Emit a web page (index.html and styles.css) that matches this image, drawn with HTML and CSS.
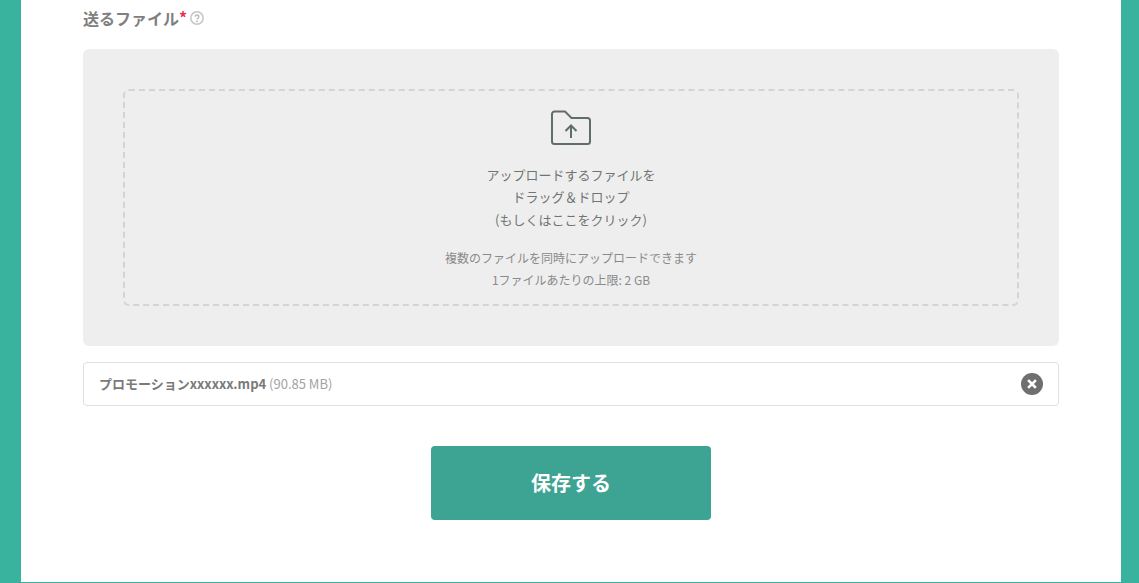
FILE: index.html
```html
<!DOCTYPE html>
<html lang="ja">
<head>
<meta charset="utf-8">
<title>送るファイル</title>
<link rel="stylesheet" href="styles.css">
</head>
<body>
<main class="panel">
  <div class="label-row">
    <span class="label">送るファイル</span><span class="req">*</span>
    <svg class="help" viewBox="0 0 14 14" width="14" height="14" aria-hidden="true">
      <circle cx="7" cy="7" r="6.200" fill="none" stroke="#c6c6c6" stroke-width="1.500"/>
      <path d="M5.200 5.700a1.800 1.800 0 1 1 2.800 1.500c-.7.500-1 .8-1 1.400" fill="none" stroke="#b4b4b4" stroke-width="1.300"/>
      <circle cx="7" cy="10.400" r=".9" fill="#b4b4b4"/>
    </svg>
  </div>
  <div class="drop-outer">
    <div class="drop-inner">
      <svg class="folder" viewBox="0 0 42 36" width="42" height="36" aria-hidden="true">
        <path d="M2 4a2.500 2.500 0 0 1 2.500-2.500h10.500l6.500 6.500h16a2.500 2.500 0 0 1 2.500 2.500v21a2.500 2.500 0 0 1-2.500 2.500h-33a2.500 2.500 0 0 1-2.500-2.500z" fill="none" stroke="#5f6e6c" stroke-width="2" stroke-linejoin="round"/>
        <path d="M21 28V15.500M15.500 21 21 15.500l5.500 5.500" fill="none" stroke="#5f6e6c" stroke-width="2"/>
      </svg>
      <p class="main-text">アップロードするファイルを<br>ドラッグ＆ドロップ<br>(もしくはここをクリック)</p>
      <p class="sub-text">複数のファイルを同時にアップロードできます<br>1ファイルあたりの上限: 2 GB</p>
    </div>
  </div>
  <div class="file-row">
    <span class="file-text"><b class="file-name">プロモーションxxxxxx.mp4</b> <span class="file-size">(90.85 MB)</span></span>
    <span class="remove">
      <svg viewBox="0 0 22 22" width="22" height="22" aria-hidden="true">
        <circle cx="11" cy="11" r="11" fill="#6f6f6f"/>
        <path d="M8 8l6 6M14 8l-6 6" stroke="#fff" stroke-width="2.500" stroke-linecap="square"/>
      </svg>
    </span>
  </div>
  <div class="actions"><button class="save" type="button"><span class="save-text">保存する</span></button></div>
</main>
</body>
</html>
```
FILE: styles.css
```css
* { box-sizing: border-box; }
html, body { margin: 0; height: 100%; overflow: hidden; }
body {
  background: #3ab39e;
  font-family: "Noto Sans CJK JP", "Noto Sans", sans-serif;
  color: #6f6f6f;
}
.panel {
  width: 1100px;
  height: 582px;
  margin-left: 21px;
  background: #fff;
  padding: 6px 62px 0;
}
.label-row {
  display: flex;
  align-items: center;
  height: 24px;
  margin-bottom: 19px;
}
.label { font-size: 16px; font-weight: 700; color: #808080; }
.req { font-size: 16px; font-weight: 700; color: #e8304f; position: relative; top: -1px; }
.help { margin-left: 3px; }
.drop-outer {
  height: 297px;
  background: #eeeeee;
  border-radius: 6px;
  padding: 40px;
}
.drop-inner {
  height: 217px;
  border: 2px dashed #d4d4d4;
  border-radius: 6px;
  display: flex;
  flex-direction: column;
  align-items: center;
  padding-top: 19px;
}
.folder { display: block; }
.main-text {
  margin: 18.400px 0 0;
  font-size: 13px;
  line-height: 22.100px;
  color: #6f7573;
  text-align: center;
}
.sub-text {
  margin: 16.400px 0 0;
  font-size: 12px;
  line-height: 22px;
  color: #8a8a8a;
  text-align: center;
}
.file-row {
  height: 44px;
  margin-top: 16px;
  border: 1px solid #dfdfe3;
  border-radius: 4px;
  display: flex;
  align-items: center;
  justify-content: space-between;
  padding: 0 15px;
  font-size: 13px;
}
.file-text { padding-bottom: 2px; }
.file-name { color: #7a7a7a; font-weight: 700; }
.file-size { color: #a3a3a3; }
.remove { display: flex; }
.actions { display: flex; justify-content: center; margin-top: 40px; }
.save {
  width: 280px;
  height: 74px;
  border: 0;
  border-radius: 4px;
  background: #3da392;
  color: #fff;
  font: 700 20px "Noto Sans CJK JP", sans-serif;
}
.save-text { display: block; padding-bottom: 2px; }
```
